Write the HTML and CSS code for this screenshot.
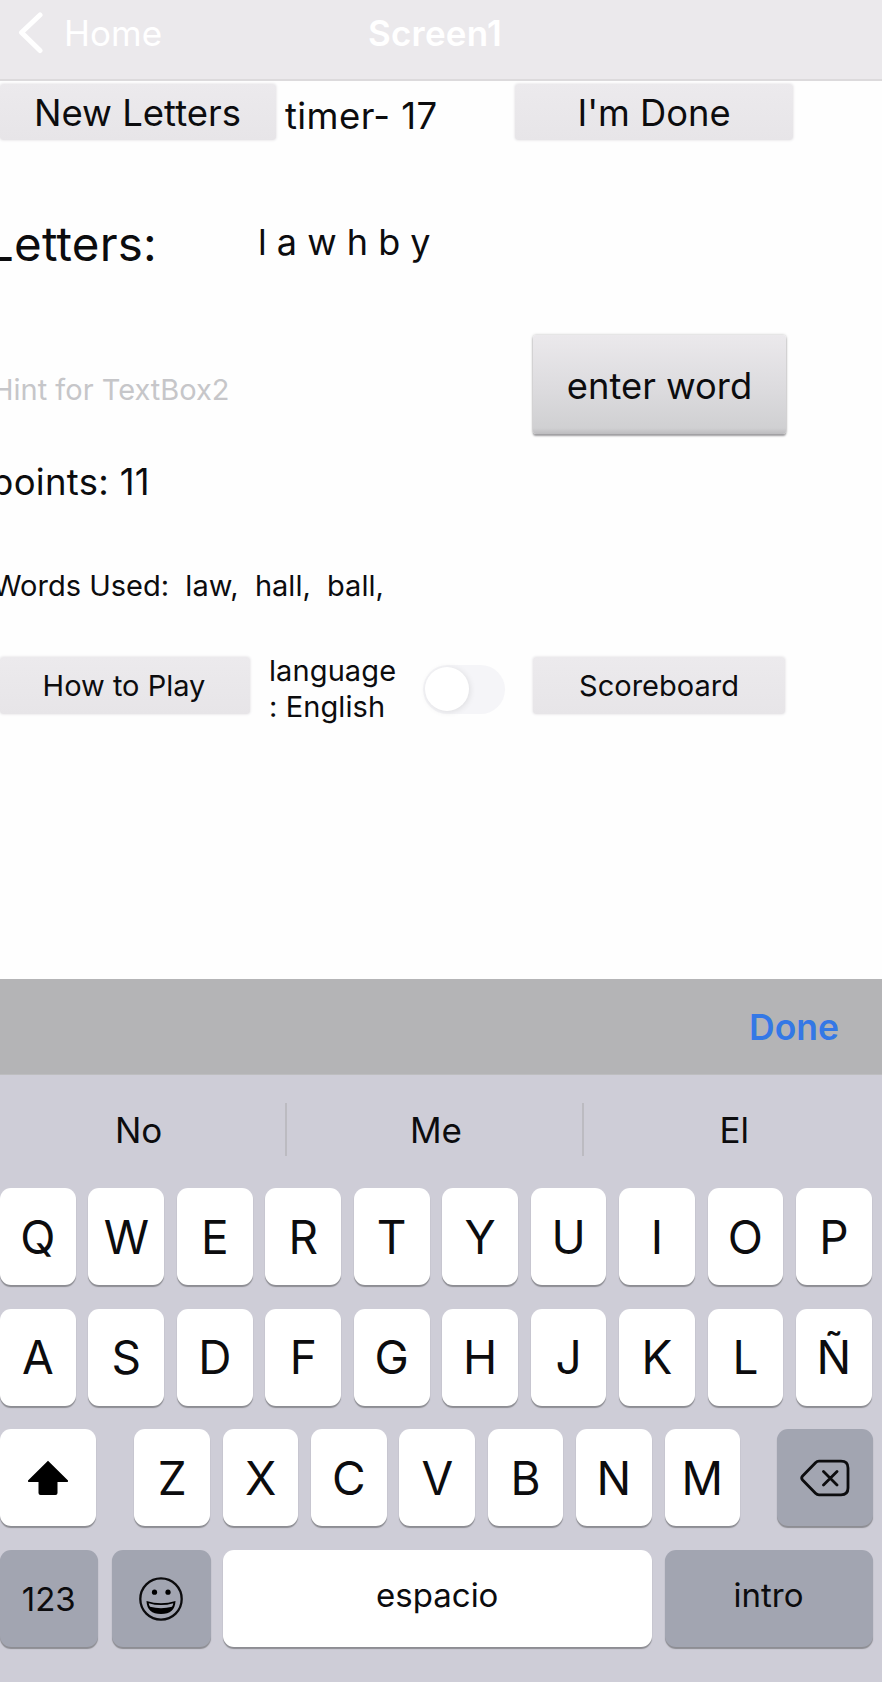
FILE: index.html
```html
<!DOCTYPE html>
<html lang="en">
<head>
<meta charset="utf-8">
<title>Screen1</title>
<link rel="stylesheet" href="styles.css">
</head>
<body>
<div class="app">
  <header class="nav">
    <svg class="chevron" viewBox="0 0 26 42"><path d="M22 3 L3.500 20.500 L22 38.500"/></svg>
    <span class="back">Home</span>
    <span class="title">Screen1</span>
  </header>
  <main class="screen">
    <div class="row row-top">
      <div class="btn btn-new">New Letters</div>
      <div class="timer">timer- 17</div>
      <div class="btn btn-done">I'm Done</div>
    </div>
    <div class="row row-letters">
      <div class="caption">Letters:</div>
      <div class="letters">l a w h b y</div>
    </div>
    <div class="row row-entry">
      <div class="hint">Hint for TextBox2</div>
      <div class="btn btn-enter">enter word</div>
    </div>
    <div class="row row-points">points: 11</div>
    <div class="row row-words">Words Used:&nbsp; law,&nbsp; hall,&nbsp; ball,</div>
    <div class="row row-bottom">
      <div class="btn btn-how">How to Play</div>
      <div class="language">language<br>: English</div>
      <div class="switch"><div class="knob"></div></div>
      <div class="btn btn-score">Scoreboard</div>
    </div>
  </main>
  <div class="accessory">Done</div>
  <section class="keyboard">
    <div class="suggestions">
      <span class="s1">No</span><i></i><span class="s2">Me</span><i></i><span class="s3">El</span>
    </div>
    <div class="keys keys-full"><b>Q</b><b>W</b><b>E</b><b>R</b><b>T</b><b>Y</b><b>U</b><b>I</b><b>O</b><b>P</b></div>
    <div class="keys keys-full"><b>A</b><b>S</b><b>D</b><b>F</b><b>G</b><b>H</b><b>J</b><b>K</b><b>L</b><b>Ñ</b></div>
    <div class="keys keys-third">
      <b class="shift"><svg viewBox="0 0 42 36" width="42" height="36"><path d="M21 .8 L41 20.500 Q41.500 22 40 22 H30.500 V33 Q30.500 35 28.500 35 H13.500 Q11.500 35 11.500 33 V22 H2 Q.500 22 1 20.500 Z"/></svg></b>
      <b>Z</b><b>X</b><b>C</b><b>V</b><b>B</b><b>N</b><b>M</b>
      <b class="dark delete"><svg viewBox="0 0 50 38" width="50" height="38"><path d="M19 2.200 H41 Q48 2.200 48 9 V29 Q48 35.800 41 35.800 H19 Q17 35.800 15.500 34.300 L2.600 21 Q.800 19 2.600 17 L15.500 3.700 Q17 2.200 19 2.200 Z M23.500 12.500 L37 26 M37 12.500 L23.500 26"/></svg></b>
    </div>
    <div class="keys keys-fourth">
      <b class="dark num">123</b>
      <b class="dark emoji"><svg viewBox="0 0 44 44" width="44" height="44"><circle class="ring" cx="22" cy="22" r="20.700"/><circle cx="15.500" cy="15.200" r="2.600"/><circle cx="29" cy="15.200" r="2.600"/><path d="M7.500 24 Q22 28.500 36.500 24 Q36 37 22 37 Q8 37 7.500 24 Z"/><path class="teeth" d="M9.700 26.200 Q22 30 34.300 26.200 Q34 28.500 33 29.800 Q22 32.500 11 29.800 Q10 28.500 9.700 26.200 Z"/></svg></b>
      <b class="space">espacio</b>
      <b class="dark enter">intro</b>
    </div>
  </section>
</div>
</body>
</html>
```
FILE: styles.css
```css
* { box-sizing: border-box; }
body { margin: 0; background: #fefefe; font-family: Inter, "Liberation Sans", sans-serif; color: #0c0c0e; }
.app { width: 882px; height: 1682px; overflow: hidden; white-space: nowrap; }

/* Navigation bar */
.nav { height: 81px; background: #ebe9ec; border-bottom: 2px solid #dcdadc; display: flex; align-items: flex-start; color: #fff; font-size: 35px; line-height: 40px; padding-top: 13px; }
.chevron { width: 26px; height: 42px; margin: -1px 0 0 18px; fill: none; stroke: #fff; stroke-width: 5; stroke-linecap: round; stroke-linejoin: round; }
.back { width: 304px; margin-left: 20px; }
.title { font-weight: 600; letter-spacing: .2px; }

/* Game screen */
.screen { height: 898px; overflow: hidden; }
.row { display: flex; align-items: flex-start; }
.btn { display: flex; align-items: center; justify-content: center; background: linear-gradient(#eceaed, #e7e5e8); border-radius: 3px; box-shadow: 0 0 3px #dddbde; height: 56px; font-size: 36px; flex: none; }
.row-top { padding-top: 3px; height: 62px; }
.btn-new { width: 276px; font-size: 36.500px; padding: 1px 1px 0 0; }
.timer { width: 230px; margin-left: 9px; font-size: 36.500px; letter-spacing: .4px; line-height: 64px; }
.btn-done { width: 278px; padding-top: 1px; font-size: 36.300px; }
.row-letters { height: 170px; padding-top: 68px; }
.caption { width: 270px; margin-left: -13px; font-size: 47.500px; letter-spacing: .2px; line-height: 66px; }
.letters { font-size: 36px; line-height: 62px; margin-left: 1px; }
.row-entry { height: 142px; padding-top: 22px; }
.hint { width: 541px; margin-left: -8px; color: #c6c6c9; font-size: 29px; line-height: 109px; }
.btn-enter { width: 253px; height: 99px; padding-top: 3px; font-size: 36.300px; background: linear-gradient(#ebe9ec, #dcdbde 55%, #d0d0d2 94%, #bdbcbf); box-shadow: 0 2px 2px #9f9ea1, 0 0 3px #bbb; }
.row-points { height: 54px; font-size: 36.500px; letter-spacing: .3px; line-height: 54px; margin-left: -9px; }
.row-words { height: 148px; font-size: 29px; line-height: 153px; margin-left: -7px; }
.row-bottom .btn { font-size: 29px; height: 57px; }
.btn-how { width: 250px; }
.row-bottom .btn-how { padding-right: 2px; }
.language { width: 154px; margin-left: 19px; font-size: 29px; letter-spacing: .1px; line-height: 36px; margin-top: -4px; }
.switch { width: 82px; height: 49px; margin-top: 8px; border-radius: 25px; background: #f5f5f8; padding: 2px; flex: none; }
.knob { width: 44px; height: 44px; border-radius: 50%; background: #fff; box-shadow: 1px 1px 6px rgba(0,0,0,.1); }
.btn-score { width: 252px; margin-left: 28px; }

/* Keyboard */
.accessory { height: 96px; background: #b4b4b6; border-bottom: 1px solid #bdbdbf; padding-left: 749px; font-size: 35.500px; font-weight: 600; line-height: 97px; color: #3478e6; }
.keyboard { height: 607px; background: #cecdd7; }
.suggestions { display: flex; height: 113px; padding-top: 28px; line-height: 54px; font-size: 35px; text-align: center; }
.suggestions i { width: 2px; height: 53px; background: #bcbbc1; }
.s1 { width: 286px; padding-right: 8px; }
.s2 { width: 295px; padding-left: 3px; }
.s3 { width: 299px; padding-left: 3px; }
.keys { display: grid; height: 97px; margin-bottom: 23.700px; }
.keys b { display: flex; align-items: center; justify-content: center; height: 97px; background: #fff; border-radius: 11px; box-shadow: 0 2px 1px #8d8d93; font-size: 46px; font-weight: 400; }
.keys .dark { background: #a2a5b1; }
.keys-full { grid-template-columns: repeat(10, 75.800px); column-gap: 12.650px; }
.keys-third { grid-template-columns: 121.700px repeat(7, 75.600px) 121px; column-gap: 12.750px; }
.keys .shift { width: 96px; }
.keys .delete { width: 96px; margin-left: 24.500px; }
.keys-fourth { display: flex; }
.keys-fourth b { font-size: 33px; padding-bottom: 7px; }
.keys .num { width: 97.500px; margin-right: 14.500px; padding: 1px 0 0; }
.keys .emoji { width: 99px; margin-right: 12px; padding: 0 1px 0 0; }
.keys .space { width: 428.500px; margin-right: 13px; }
.keys .enter { width: 208px; }
.delete svg { fill: none; stroke: #0c0c0e; stroke-width: 2.800; stroke-linecap: round; }
.emoji .ring { fill: none; stroke: #0c0c0e; stroke-width: 2.300; }
.emoji .teeth { fill: #a2a5b1; }
```
